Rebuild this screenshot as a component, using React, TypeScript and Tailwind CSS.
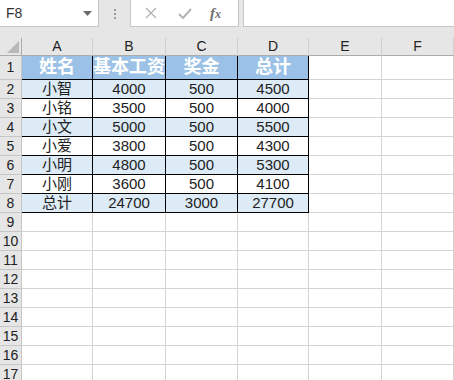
import React from 'react';

const cols = ['A', 'B', 'C', 'D', 'E', 'F'];

const data = [
  ['小智', '4000', '500', '4500'],
  ['小铭', '3500', '500', '4000'],
  ['小文', '5000', '500', '5500'],
  ['小爱', '3800', '500', '4300'],
  ['小明', '4800', '500', '5300'],
  ['小刚', '3600', '500', '4100'],
  ['总计', '24700', '3000', '27700'],
];

const font = { fontFamily: '"Liberation Sans", "Noto Sans CJK SC", sans-serif' };

function RowHead({ n, tall }: { n: number; tall?: boolean }) {
  return (
    <div
      className={`flex items-center justify-center bg-[#e6e6e6] border-r border-b border-[#c6c6c6] text-[14px] text-[#222] ${
        tall ? 'h-[24px]' : 'h-[19px]'
      }`}
    >
      {n}
    </div>
  );
}

export default function App() {
  const headers = ['姓名', '基本工资', '奖金', '总计'];

  return (
    <div className="w-[454px] h-[380px] overflow-hidden bg-white" style={font}>
      {/* Formula bar */}
      <div className="h-[38px] bg-[#e6e6e6] flex items-start">
        <div className="w-[99px] h-[27px] bg-white border-r border-b border-[#c6c6c6] flex items-center justify-between pl-[6px] pr-[6px]">
          <span className="text-[14px] text-[#333]">F8</span>
          <svg width="9" height="5" viewBox="0 0 9 5">
            <path d="M0 0 H9 L4.5 5 Z" fill="#6b6b6b" />
          </svg>
        </div>
        <div className="w-[31px] h-[27px] flex flex-col items-center justify-center gap-[2px]">
          <span className="w-[2px] h-[2px] bg-[#9a9a9a]" />
          <span className="w-[2px] h-[2px] bg-[#9a9a9a]" />
          <span className="w-[2px] h-[2px] bg-[#9a9a9a]" />
        </div>
        <div className="w-[109px] h-[27px] bg-white border-x border-b border-[#c6c6c6] flex items-center">
          <svg className="ml-[14px]" width="12" height="12" viewBox="0 0 12 12">
            <path d="M1 1 L11 11 M11 1 L1 11" stroke="#b4b4b4" strokeWidth="1.4" />
          </svg>
          <svg className="ml-[21px]" width="14" height="11" viewBox="0 0 14 11">
            <path d="M1 6 L5 10 L13 1" stroke="#b4b4b4" strokeWidth="2" fill="none" />
          </svg>
          <span
            className="ml-[18px] text-[15px] italic font-bold text-[#6e6e6e]"
            style={{ fontFamily: '"Liberation Serif", serif' }}
          >
            f<span className="text-[12px]">x</span>
          </span>
        </div>
        <div className="ml-[4px] flex-1 h-[27px] bg-white border-l border-b border-[#c6c6c6]" />
      </div>

      {/* Sheet grid */}
      <div className="grid grid-cols-[22px_71px_73px_72px_71px_73px_72px]">
        {/* Column headers */}
        <div className="h-[18px] bg-[#e6e6e6] border-r border-b border-[#ababab] relative">
          <svg className="absolute right-[2px] bottom-[2px]" width="12" height="12" viewBox="0 0 12 12">
            <path d="M12 0 V12 H0 Z" fill="#b8b8b8" />
          </svg>
        </div>
        {cols.map((c) => (
          <div
            key={c}
            className="h-[18px] bg-[#e6e6e6] border-r border-b border-r-[#cfcfcf] border-b-[#ababab] flex items-center justify-center text-[14px] text-[#222]"
          >
            {c}
          </div>
        ))}

        {/* Row 1 */}
        <RowHead n={1} tall />
        {headers.map((h) => (
          <div
            key={h}
            className="h-[24px] bg-[#9bc2e6] border-r border-b border-black flex items-center justify-center overflow-hidden whitespace-nowrap text-[18px] font-bold text-white"
          >
            {h}
          </div>
        ))}
        <div className="h-[24px] border-r border-b border-[#d4d4d4]" />
        <div className="h-[24px] border-r border-b border-[#d4d4d4]" />

        {/* Data rows */}
        {data.map((row, i) => (
          <React.Fragment key={i}>
            <RowHead n={i + 2} />
            {row.map((v, j) => (
              <div
                key={j}
                className={`h-[19px] border-r border-b border-black flex items-center justify-center overflow-hidden whitespace-nowrap text-[#222] text-[15px] ${
                  i % 2 === 0 ? 'bg-[#ddebf7]' : 'bg-white'
                }`}
              >
                {v}
              </div>
            ))}
            <div className="h-[19px] border-r border-b border-[#d4d4d4]" />
            <div className="h-[19px] border-r border-b border-[#d4d4d4]" />
          </React.Fragment>
        ))}

        {/* Empty rows */}
        {[9, 10, 11, 12, 13, 14, 15, 16, 17].map((n) => (
          <React.Fragment key={n}>
            <RowHead n={n} />
            {cols.map((c) => (
              <div key={c} className="h-[19px] border-r border-b border-[#d4d4d4]" />
            ))}
          </React.Fragment>
        ))}
      </div>
    </div>
  );
}
